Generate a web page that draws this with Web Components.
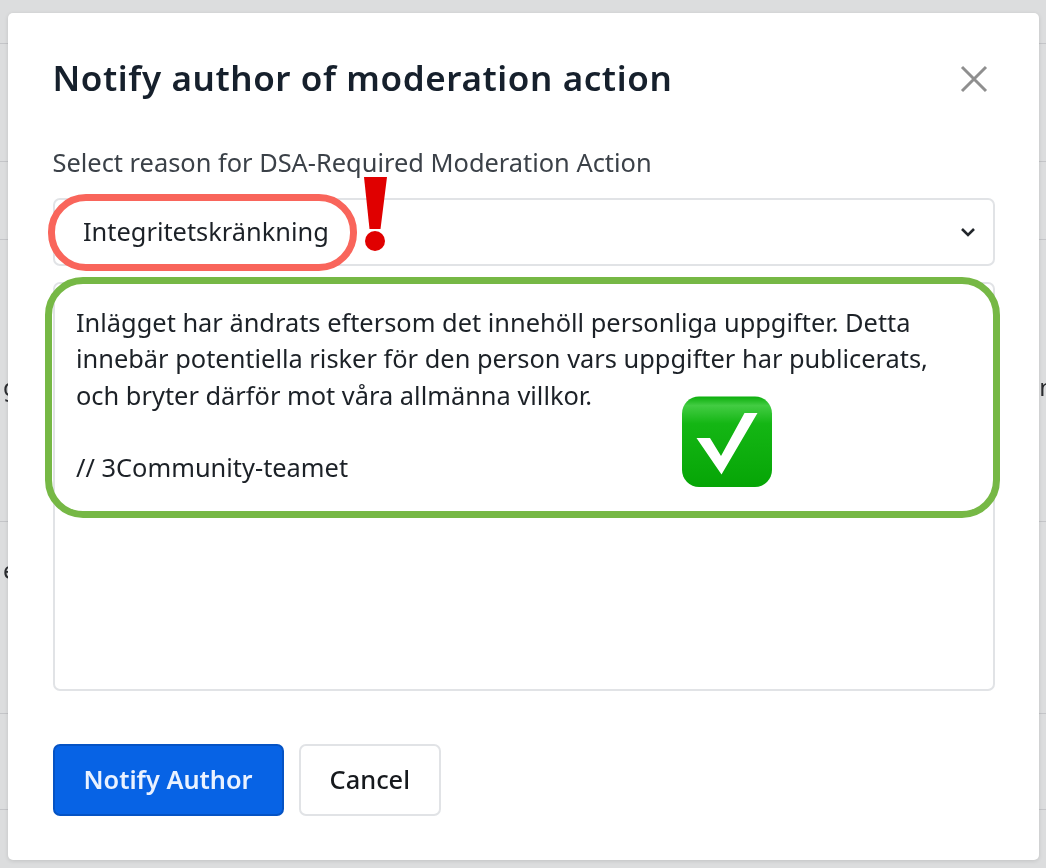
<!DOCTYPE html>
<html>
<head>
<meta charset="utf-8">
<title>Notify author</title>
<style>
  html, body { margin: 0; height: 100%; }
  body { font-family: "Noto Sans", sans-serif; overflow: hidden; filter: blur(0.45px); }
</style>
</head>
<body>
<page-behind></page-behind>
<notify-modal heading="Notify author of moderation action">
  <span slot="label">Select reason for DSA-Required Moderation Action</span>
  <reason-select value="Integritetskränkning"></reason-select>
  <message-box>Inlägget har ändrats eftersom det innehöll personliga uppgifter. Detta
innebär potentiella risker för den person vars uppgifter har publicerats,
och bryter därför mot våra allmänna villkor.

// 3Community-teamet</message-box>
  <action-button slot="actions" kind="primary">Notify Author</action-button>
  <action-button slot="actions">Cancel</action-button>
</notify-modal>
<mark-ups></mark-ups>

<script>
class PageBehind extends HTMLElement {
    constructor() {
        super()
        this.shadowDOM = this.attachShadow({mode:"open"})
        const rows = [
            [44, "", "", 0],
            [118, "", "", 0],
            [78, "", "", 0],
            [282, "g", "n", 131],
            [192, "e", "", 32],
            [96, "", "", 0],
            [58, "", "", 0]
        ]
        this.shadowDOM.innerHTML = `
            <style>
            :host {
                display: block;
                height: 868px;
                background: #dcddde;
                color: #2b2d30;
                font-size: 24px;
            }
            .row {
                box-sizing: border-box;
                display: flex;
                justify-content: space-between;
                align-items: flex-start;
                border-bottom: 1px solid #c4c5c8;
                padding: 0 0 0 3px;
                line-height: 32px;
            }
            .row:last-child { border-bottom: 0; }
            .r { margin-right: -8px; }
            </style>
            ${rows.map(r => `<div class="row" style="height:${r[0]}px;padding-top:${r[3]}px"><span>${r[1]}</span><span class="r">${r[2]}</span></div>`).join("")}
        `
    }
}

class NotifyModal extends HTMLElement {
    constructor() {
        super()
        this.shadowDOM = this.attachShadow({mode:"open"})
        this.shadowDOM.innerHTML = `
            <style>
            :host {
                position: absolute;
                left: 8px;
                top: 13px;
                width: 1031px;
                height: 847px;
                box-sizing: border-box;
                padding: 40px 44px 0 44.5px;
                display: flex;
                flex-direction: column;
                background: #fff;
                border-radius: 5px;
                box-shadow: 0 1px 4px rgba(0,0,0,0.12);
            }
            header {
                display: flex;
                justify-content: space-between;
                align-items: center;
                height: 50px;
            }
            h1 {
                margin: 0;
                font-size: 35px;
                letter-spacing: 0.6px;
                font-weight: 600;
                color: #16202c;
                line-height: 50px;
            }
            .close {
                display: block;
                margin-right: 7px;
                margin-top: 2px;
            }
            .label {
                margin-top: 42px;
                height: 34px;
                font-size: 25.4px;
                line-height: 34px;
                color: #3b4148;
            }
            .fields {
                margin-top: 19px;
                display: flex;
                flex-direction: column;
                gap: 16px;
            }
            .actions {
                margin-top: 53px;
                display: flex;
                gap: 15px;
            }
            </style>
            <header>
                <h1>${this.getAttribute("heading")}</h1>
                <svg class="close" width="28" height="28" viewBox="0 0 28 28" fill="none" stroke="#8f8f8f" stroke-width="3">
                    <path d="M2 2 L26 26 M26 2 L2 26"/>
                </svg>
            </header>
            <div class="label"><slot name="label"></slot></div>
            <div class="fields"><slot></slot></div>
            <div class="actions"><slot name="actions"></slot></div>
        `
    }
}

class ReasonSelect extends HTMLElement {
    constructor() {
        super()
        this.shadowDOM = this.attachShadow({mode:"open"})
        this.shadowDOM.innerHTML = `
            <style>
            :host {
                display: flex;
                box-sizing: border-box;
                height: 68px;
                align-items: center;
                justify-content: space-between;
                padding: 0 17px 3px 28.5px;
                border: 2px solid #e1e3e6;
                border-radius: 7px;
                font-size: 25.4px;
                color: #1c2127;
            }
            svg { display: block; margin-top: 3px; }
            </style>
            <span>${this.getAttribute("value")}</span>
            <svg width="16" height="10" viewBox="0 0 16 10" fill="none" stroke="#22262b" stroke-width="2.6">
                <path d="M2 2 L8 8 L14 2"/>
            </svg>
        `
    }
}

class MessageBox extends HTMLElement {
    constructor() {
        super()
        this.shadowDOM = this.attachShadow({mode:"open"})
        this.shadowDOM.innerHTML = `
            <style>
            :host {
                display: block;
                box-sizing: border-box;
                height: 409px;
                padding: 20px 20px 0 21.5px;
                border: 2px solid #e1e3e6;
                border-radius: 7px;
                font-size: 25.4px;
                line-height: 36.25px;
                color: #1c2127;
            }
            .text { white-space: pre-wrap; }
            </style>
            <div class="text"><slot></slot></div>
        `
    }
}

class ActionButton extends HTMLElement {
    constructor() {
        super()
        this.shadowDOM = this.attachShadow({mode:"open"})
        this.shadowDOM.innerHTML = `
            <style>
            :host {
                display: inline-flex;
                box-sizing: border-box;
                height: 72px;
                align-items: center;
                justify-content: center;
                padding: 0 29px 2px;
                border: 2px solid #e1e3e6;
                border-radius: 7px;
                background: #fff;
                color: #16191d;
                font-size: 25.4px;
                font-weight: 500;
            }
            :host([kind="primary"]) {
                background: #0763e5;
                border-color: #0553c4;
                color: #eaf2ff;
                font-size: 25.3px;
                font-weight: 600;
            }
            </style>
            <slot></slot>
        `
    }
}

class MarkUps extends HTMLElement {
    constructor() {
        super()
        this.shadowDOM = this.attachShadow({mode:"open"})
        this.shadowDOM.innerHTML = `
            <style>
            :host { display: contents; }
            .pill, .frame, svg { position: absolute; display: block; box-sizing: border-box; }
            .pill {
                left: 48px;
                top: 194px;
                width: 309px;
                height: 77px;
                border: 7px solid #f9655b;
                border-radius: 38px;
            }
            .frame {
                left: 45px;
                top: 277px;
                width: 955px;
                height: 241px;
                border: 7px solid #76b845;
                border-radius: 38px;
            }
            .bang { left: 360px; top: 175px; }
            .tick { left: 682px; top: 396px; }
            </style>
            <div class="pill"></div>
            <div class="frame"></div>
            <svg class="bang" width="30" height="78" viewBox="0 0 30 78">
                <path d="M4 2 H27 L20.5 54 H9.5 Z" fill="#e00000"/>
                <circle cx="15" cy="66" r="10" fill="#e00000"/>
            </svg>
            <svg class="tick" width="91" height="92" viewBox="0 0 91 92">
                <defs>
                    <linearGradient id="g" x1="0" y1="0" x2="0" y2="1">
                        <stop offset="0" stop-color="#0bae0b"/>
                        <stop offset="0.1" stop-color="#43cc43"/>
                        <stop offset="0.3" stop-color="#14b614"/>
                        <stop offset="1" stop-color="#06a506"/>
                    </linearGradient>
                </defs>
                <rect x="0" y="0.5" width="90" height="90.5" rx="17" fill="url(#g)"/>
                <path d="M14.5 42 H28 L39 60 L62.5 17 H75.5 L39.5 78.5 Z" fill="#fff"/>
            </svg>
        `
    }
}

customElements.define("page-behind", PageBehind)
customElements.define("notify-modal", NotifyModal)
customElements.define("reason-select", ReasonSelect)
customElements.define("message-box", MessageBox)
customElements.define("action-button", ActionButton)
customElements.define("mark-ups", MarkUps)
</script>
</body>
</html>
